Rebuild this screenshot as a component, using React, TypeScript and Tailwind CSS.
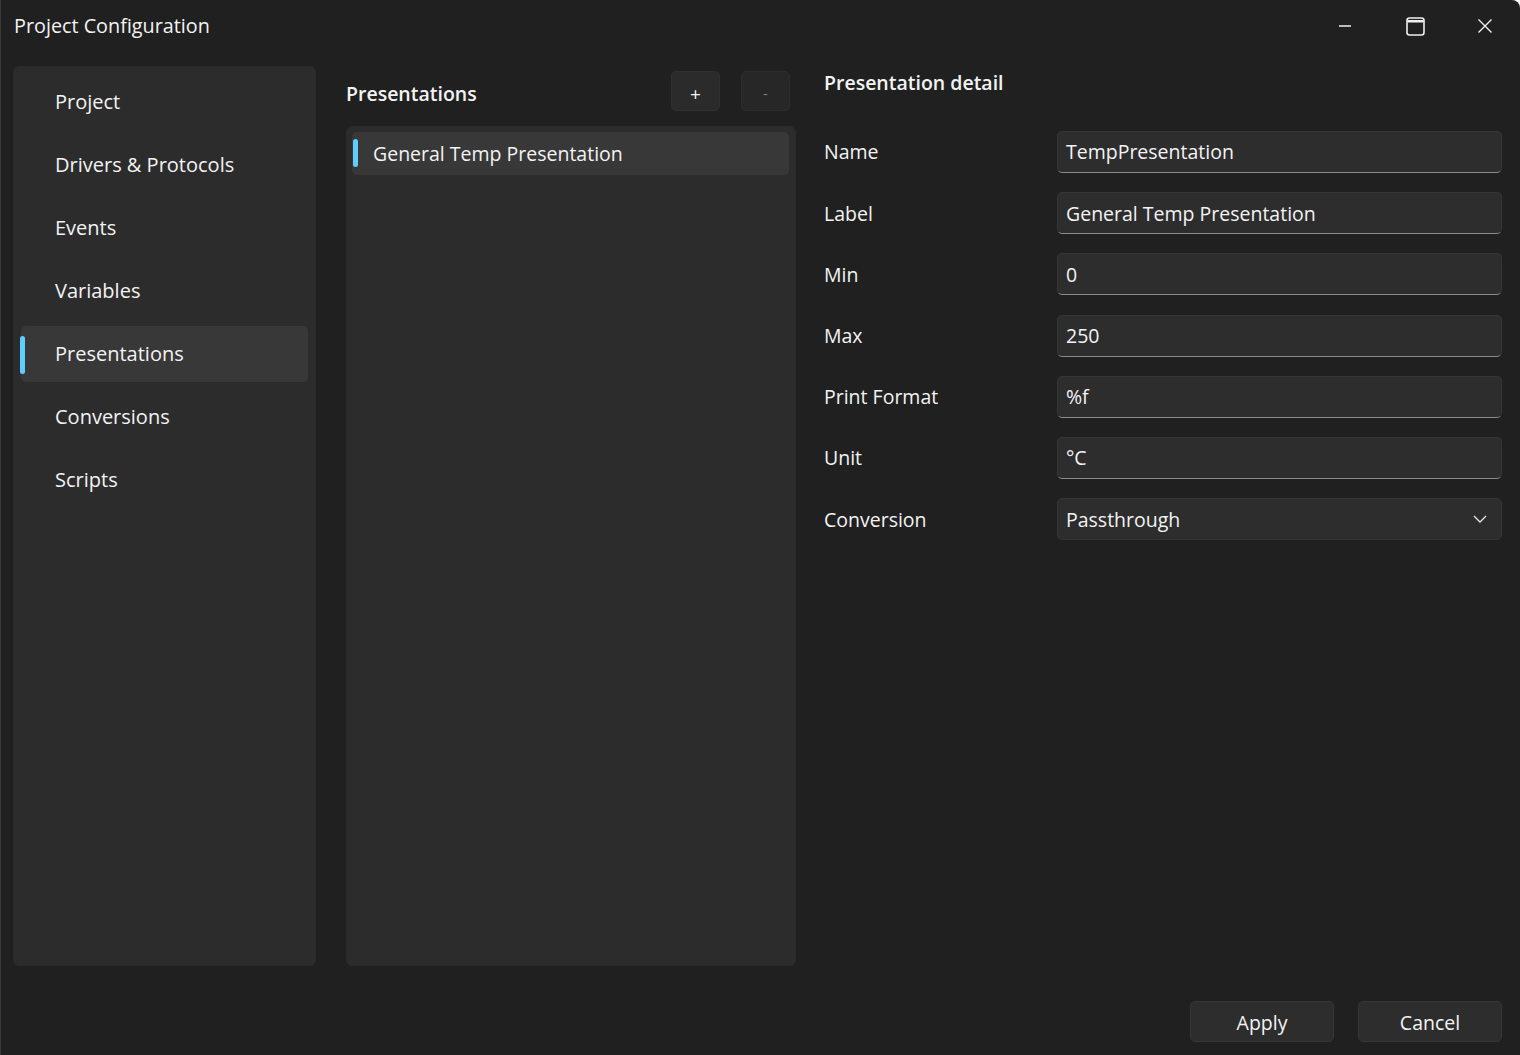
const font = { fontFamily: '"Open Sans", "Noto Sans", sans-serif' };

const navItems = [
  "Project",
  "Drivers & Protocols",
  "Events",
  "Variables",
  "Presentations",
  "Conversions",
  "Scripts",
];

const fields = [
  { label: "Name", value: "TempPresentation" },
  { label: "Label", value: "General Temp Presentation" },
  { label: "Min", value: "0" },
  { label: "Max", value: "250" },
  { label: "Print Format", value: "%f" },
  { label: "Unit", value: "°C" },
];

function TitleBar() {
  return (
    <div className="flex h-[52px] items-center justify-between pl-[13px]">
      <span className="text-[19.8px] text-[#f3f3f3]">Project Configuration</span>
      <div className="flex h-full items-center">
        {/* minimize */}
        <div className="flex h-full w-[70px] items-center justify-center">
          <svg width="14" height="14" viewBox="0 0 14 14">
            <path d="M1 7h12" stroke="#f0f0f0" strokeWidth="1.5" />
          </svg>
        </div>
        {/* maximize */}
        <div className="flex h-full w-[70px] items-center justify-center">
          <svg width="19" height="19" viewBox="0 0 19 19">
            <rect x="1" y="1" width="17" height="17" rx="2.5" fill="none" stroke="#f0f0f0" strokeWidth="1.6" />
            <path d="M1.5 4.3h16" stroke="#f0f0f0" strokeWidth="2.4" />
          </svg>
        </div>
        {/* close */}
        <div className="flex h-full w-[70px] items-center justify-center">
          <svg width="16" height="16" viewBox="0 0 16 16">
            <path d="M1.5 1.5l13 13M14.5 1.5l-13 13" stroke="#f0f0f0" strokeWidth="1.4" />
          </svg>
        </div>
      </div>
    </div>
  );
}

function NavPanel() {
  return (
    <div className="flex w-[303px] flex-col gap-[7px] rounded-md border border-[#2a2a2a] bg-[#2c2c2c] px-[7px] pt-[7px]">
      {navItems.map((item) => {
        const active = item === "Presentations";
        return (
          <div
            key={item}
            className={`relative flex h-[56px] items-center rounded-[5px] pl-[34px] text-[20px] text-[#f3f3f3] ${
              active ? "bg-[#383838]" : ""
            }`}
          >
            {active && (
              <span className="absolute left-[-1px] top-[10px] h-[38px] w-[5px] rounded-full bg-[#60cdff]" />
            )}
            {item}
          </div>
        );
      })}
    </div>
  );
}

function ListPanel() {
  return (
    <div className="flex w-[450px] flex-col">
      <div className="flex h-[60px] items-start justify-between">
        <span className="mt-[13px] text-[19.5px] font-semibold text-[#f3f3f3]">Presentations</span>
        <div className="mr-[6px] mt-[5px] flex gap-[21px]">
          <button className="flex h-[40px] w-[49px] items-center justify-center rounded-[5px] border border-[#303030] bg-[#2b2b2b] pt-[6px] text-[19px] text-[#f3f3f3]">
            +
          </button>
          <button className="flex h-[40px] w-[49px] items-center justify-center rounded-[5px] border border-[#2c2c2c] bg-[#272727] pt-[5px] text-[15px] text-[#7a7a7a]">
            -
          </button>
        </div>
      </div>
      <div className="flex-1 rounded-md border border-[#2a2a2a] bg-[#2c2c2c] pl-[5px] pr-[6px] pt-[5px]">
        <div className="relative flex h-[43px] items-center rounded-[5px] bg-[#383838] pl-[21px] text-[19.5px] text-[#f3f3f3]">
          <span className="absolute left-[1px] top-[7px] h-[28px] w-[5px] rounded-full bg-[#60cdff]" />
          General Temp Presentation
        </div>
      </div>
    </div>
  );
}

function Input({ value }: { value: string }) {
  return (
    <div className="flex h-[42px] w-[445px] items-center rounded-[5px] border border-[#353535] border-b-[#8b8b8b] bg-[#2d2d2d] pl-[8px] text-[19.5px] text-[#f3f3f3]">
      {value}
    </div>
  );
}

function DetailPanel() {
  return (
    <div className="flex flex-1 flex-col">
      <div className="mt-[2px] h-[30px] text-[19.5px] font-semibold text-[#f3f3f3]">Presentation detail</div>
      <div className="mt-[33px] flex flex-col gap-[19.2px]">
        {fields.map((f) => (
          <div key={f.label} className="flex items-center justify-between">
            <span className="text-[19.5px] text-[#f3f3f3]">{f.label}</span>
            <Input value={f.value} />
          </div>
        ))}
        <div className="flex items-center justify-between">
          <span className="text-[19.5px] text-[#f3f3f3]">Conversion</span>
          <div className="flex h-[42px] w-[445px] items-center justify-between rounded-[5px] border border-[#353535] bg-[#2d2d2d] pl-[8px] pr-[14px] text-[19.5px] text-[#f3f3f3]">
            Passthrough
            <svg width="14" height="8" viewBox="0 0 14 8">
              <path d="M1 1l6 6 6-6" fill="none" stroke="#e6e6e6" strokeWidth="1.3" />
            </svg>
          </div>
        </div>
      </div>
    </div>
  );
}

export default function App() {
  return (
    <div
      style={font}
      className="flex h-[1055px] w-[1520px] flex-col overflow-hidden rounded-tr-lg border-l border-[#3a3a3a] bg-[#202020]"
    >
      <TitleBar />
      <div className="mt-[14px] flex h-[900px] pl-[12px] pr-[18px]">
        <NavPanel />
        <div className="w-[30px]" />
        <ListPanel />
        <div className="w-[28px]" />
        <DetailPanel />
      </div>
      <div className="mt-[35px] flex justify-end gap-[24px] pr-[18px]">
        <button className="h-[41px] w-[144px] rounded-[5px] border border-[#353535] bg-[#2d2d2d] pt-[2px] text-[19.5px] text-[#f3f3f3]">
          Apply
        </button>
        <button className="h-[41px] w-[144px] rounded-[5px] border border-[#353535] bg-[#2d2d2d] pt-[2px] text-[19.5px] text-[#f3f3f3]">
          Cancel
        </button>
      </div>
    </div>
  );
}
